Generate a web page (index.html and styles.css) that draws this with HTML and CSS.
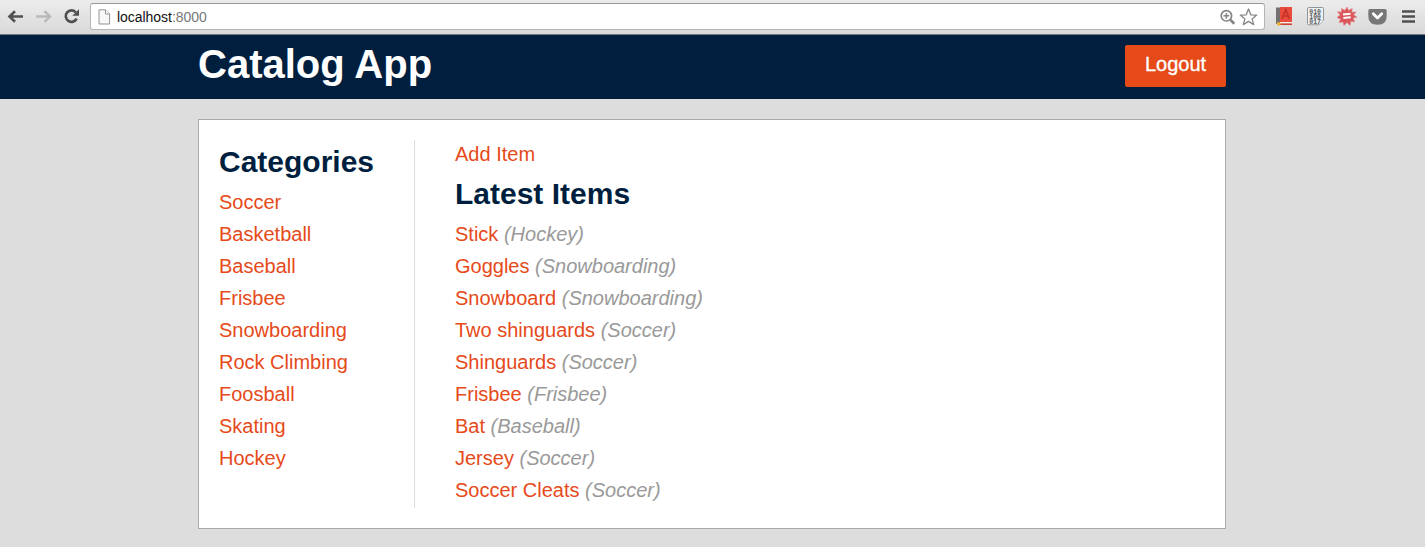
FILE: index.html
```html
<!DOCTYPE html>
<html lang="en">
<head>
<meta charset="utf-8">
<title>Catalog App</title>
<link rel="stylesheet" href="styles.css">
</head>
<body>
<div class="toolbar">
  <svg class="nav-icons" width="90" height="34" viewBox="0 0 90 34" fill="none">
    <path d="M9 16.5H23M15 11.2L9.5 16.5L15 21.8" stroke="#505050" stroke-width="2.6"/>
    <path d="M36 16.5H50M44.5 11.2L50 16.5L44.5 21.8" stroke="#b9b9b9" stroke-width="2.4"/>
    <path d="M75.7 12.3A5.7 5.7 0 1 0 76.6 18.6" stroke="#505050" stroke-width="2.7"/>
    <path d="M79 9.3V15.8H72.3Z" fill="#505050"/>
  </svg>
  <div class="address">
    <svg width="13" height="16" viewBox="0 0 13 16" fill="#f8f8f8" stroke="#949494">
      <path d="M1 .8H7.5L11.6 5V15H1Z"/><path d="M7.5 .8V5H11.6"/>
    </svg>
    <span class="url">localhost<span class="port">:8000</span></span>
    <svg class="address-icons" width="42" height="22" viewBox="0 0 42 22" fill="none" stroke="#858585">
      <circle cx="7.4" cy="9.8" r="5.2" stroke-width="1.7"/><path d="M11.2 13.6L15.3 17.7" stroke-width="2.7"/><path d="M4.5 9.8H10.3M7.4 6.9V12.7" stroke-width="1.5"/>
      <path d="M29.5 3L31.8 8.8L37.7 9.1L33.1 12.9L34.7 18.6L29.5 15.4L24.3 18.6L25.9 12.9L21.3 9.1L27.2 8.8Z" fill="#fff" stroke-width="1.3" stroke-linejoin="round"/>
    </svg>
  </div>
  <svg class="extensions" width="160" height="34" viewBox="1265 0 160 34">
    <path d="M1276 7.5H1280V24H1276Z" fill="#74706f"/><path d="M1280 7H1292V22H1280Z" fill="#e94b3d"/>
    <path d="M1280 22H1292V23.4H1280Z" fill="#f4eeee"/><path d="M1279 23.4H1292V25H1279Z" fill="#cf4035"/>
    <path d="M1282 19L1285.7 9.5L1289.5 19M1283.3 16H1288.2" fill="none" stroke="#c43229" stroke-width="1.7"/>
    <path d="M1277 22L1281 22.7L1280 25.5H1277Z" fill="#edb531"/>
    <path d="M1309 7.5H1322.500Q1323.500 7.500 1323.500 8.500V20L1319 24.800H1309Q1307.500 24.800 1307.500 23.300V9Q1307.500 7.500 1309 7.500Z" fill="#eef0f1" stroke="#90979c"/>
    <path d="M1319 24.500V20.500H1323" fill="#fff" stroke="#bcc0c3" stroke-width=".6"/>
    <g class="binary"><text x="1309.300" y="13.500">010</text><text x="1309.300" y="18.700">100</text><text x="1309.300" y="23.900">017</text></g>
    <path d="M1347 7L1348.600 10.500L1352.200 8.500L1351.800 12.200L1356 12L1353.500 15L1357 17L1353.200 18.200L1354.600 22L1350.800 21.300L1350 25.500L1347 22.500L1344 25.600L1343 22L1339 22.600L1340.600 19L1337 17.500L1340.200 15L1337.500 11.800L1341.600 12L1341.500 8.500L1345 10.400Z" fill="#d9565a" stroke="#e58383" stroke-width=".7"/>
    <path d="M1343 14.500L1350.500 13.800M1343.400 18L1350.700 17.300" stroke="#fff" stroke-width="1.900"/>
    <path d="M1370 9H1385Q1386.700 9 1386.700 10.700V16Q1386.700 24.700 1377.500 24.700Q1368.300 24.700 1368.300 16V10.700Q1368.300 9 1370 9Z" fill="#777"/>
    <path d="M1373.300 13.800L1377.500 18L1381.700 13.800" fill="none" stroke="#fff" stroke-width="2.800" stroke-linecap="round" stroke-linejoin="round"/>
    <path d="M1402 11.500H1415M1402 16.500H1415M1402 21.500H1415" stroke="#505050" stroke-width="2.700"/>
  </svg>
</div>
<header class="header">
  <div class="header-inner">
    <h1>Catalog App</h1>
    <a class="logout">Logout</a>
  </div>
</header>
<main class="content">
  <section class="categories">
    <h2>Categories</h2>
    <ul>
      <li><a>Soccer</a></li>
      <li><a>Basketball</a></li>
      <li><a>Baseball</a></li>
      <li><a>Frisbee</a></li>
      <li><a>Snowboarding</a></li>
      <li><a>Rock Climbing</a></li>
      <li><a>Foosball</a></li>
      <li><a>Skating</a></li>
      <li><a>Hockey</a></li>
    </ul>
  </section>
  <section class="items">
    <a class="add-item">Add Item</a>
    <h2>Latest Items</h2>
    <ul>
      <li><a>Stick</a> <em>(Hockey)</em></li>
      <li><a>Goggles</a> <em>(Snowboarding)</em></li>
      <li><a>Snowboard</a> <em>(Snowboarding)</em></li>
      <li><a>Two shinguards</a> <em>(Soccer)</em></li>
      <li><a>Shinguards</a> <em>(Soccer)</em></li>
      <li><a>Frisbee</a> <em>(Frisbee)</em></li>
      <li><a>Bat</a> <em>(Baseball)</em></li>
      <li><a>Jersey</a> <em>(Soccer)</em></li>
      <li><a>Soccer Cleats</a> <em>(Soccer)</em></li>
    </ul>
  </section>
</main>
</body>
</html>
```
FILE: styles.css
```css
* { box-sizing: border-box; }
body {
  margin: 0;
  height: 547px;
  overflow: hidden;
  background: #ddd;
  color: #001f3f;
  font: 20px/32px Helvetica, "Liberation Sans", Arial, sans-serif;
}
h1, h2, ul { margin: 0; padding: 0; }
ul { list-style: none; }
svg { display: block; flex: none; }
.toolbar {
  display: flex;
  height: 35px;
  background: linear-gradient(#ececec, #d9d9d9);
  border-bottom: 1px solid #777;
}
.address {
  display: flex;
  align-items: center;
  width: 1175px;
  height: 27px;
  margin-top: 3px;
  padding: 0 3px 0 7px;
  background: #fff;
  border: 1px solid #b5b5b5;
  border-top-color: #999;
  border-radius: 3px;
}
.url {
  flex: 1;
  margin-left: 6px;
  color: #111;
  font-size: 14px;
  line-height: 20px;
  letter-spacing: -.04px;
}
.port { color: #777; }
.binary { font: bold 6.5px "Liberation Mono", monospace; fill: #5b6165; }
.header { height: 64px; background: #001f3f; color: #fff; }
.header-inner {
  display: flex;
  justify-content: space-between;
  width: 1028px;
  margin-left: 198px;
}
h1 { font-size: 40px; line-height: 58px; }
.logout {
  width: 101px;
  height: 42px;
  margin-top: 10px;
  border-radius: 2px;
  background: #e64a19;
  line-height: 38px;
  text-align: center;
  -webkit-text-stroke: .35px #fff;
}
.content {
  display: flex;
  width: 1028px;
  height: 410px;
  margin: 20px 0 0 198px;
  padding: 20px;
  background: #fff;
  border: 1px solid #aaa;
}
.categories { width: 196px; height: 368px; border-right: 1px solid #ddd; }
.items { padding-left: 40px; }
h2 { font-size: 30px; line-height: 43px; padding-bottom: 3px; }
a { color: #e64a19; }
.logout { color: #fff; }
.add-item { display: block; height: 32px; line-height: 28px; }
em { color: #999; }
```
